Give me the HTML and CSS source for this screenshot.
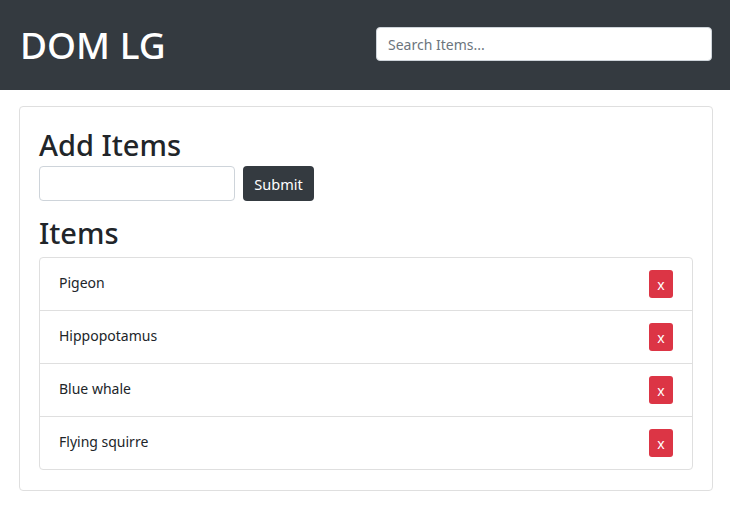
FILE: index.html
```html
<!DOCTYPE html>
<html>
<head>
<meta charset="utf-8">
<link rel="stylesheet" href="styles.css">
</head>
<body>
<header class="navbar">
  <h1 class="brand">DOM LG</h1>
  <input class="search" type="text" placeholder="Search Items...">
</header>
<main class="container">
  <section class="card">
    <h2 class="title">Add Items</h2>
    <form class="add-form">
      <input class="field" type="text">
      <button class="btn-dark" type="button">Submit</button>
    </form>
    <h2 class="title items-title">Items</h2>
    <ul class="list">
      <li class="item"><span>Pigeon</span><button class="btn-del" type="button">x</button></li>
      <li class="item"><span>Hippopotamus</span><button class="btn-del" type="button">x</button></li>
      <li class="item"><span>Blue whale</span><button class="btn-del" type="button">x</button></li>
      <li class="item"><span>Flying squirre</span><button class="btn-del" type="button">x</button></li>
    </ul>
  </section>
</main>
</body>
</html>
```
FILE: styles.css
```css
* { box-sizing: border-box; }
body {
  margin: 0;
  font-family: "Noto Sans", "Open Sans", sans-serif;
  color: #212529;
  background: #fff;
}
.navbar {
  background: #343a40;
  height: 90px;
  display: flex;
  align-items: center;
  justify-content: space-between;
  padding: 0 18px 0 20px;
}
.brand {
  margin: 0;
  color: #fff;
  font-size: 37px;
  font-weight: 500;
  line-height: 1.2;
}
.search {
  width: 336px;
  height: 34px;
  border: 1px solid #ced4da;
  border-radius: 4px;
  padding: 0 11px;
  font-family: inherit;
  font-size: 14px;
  color: #495057;
  margin-top: -2px;
}
.search::placeholder { color: #6c757d; }
.container {
  padding: 16px 17px 0 19px;
}
.card {
  border: 1px solid #dfdfdf;
  border-radius: 4px;
  padding: 20px 19px 20px 19px;
}
.title {
  margin: 0;
  font-size: 29px;
  font-weight: 500;
  line-height: 36px;
}
.add-form {
  display: flex;
  gap: 8px;
  margin-top: 3px;
}
.field {
  width: 196px;
  height: 35px;
  border: 1px solid #ced4da;
  border-radius: 4px;
}
.btn-dark {
  height: 35px;
  width: 71px;
  background: #343a40;
  color: #fff;
  border: none;
  border-radius: 4px;
  font-family: inherit;
  font-size: 14.5px;
}
.items-title { margin-top: 14px; }
.list {
  list-style: none;
  margin: 6px 0 0;
  padding: 0;
  border: 1px solid #dfdfdf;
  border-radius: 4px;
}
.item {
  display: flex;
  align-items: center;
  justify-content: space-between;
  padding: 12px 19px 12px 19px;
  font-size: 14px;
  border-top: 1px solid #dfdfdf;
  height: 53px;
}
.item:first-child { border-top: none; height: 52px; }
.item span { margin-top: -4px; }
.btn-del {
  width: 24px;
  height: 28px;
  background: #dc3545;
  color: #fff;
  border: none;
  border-radius: 3px;
  font-family: inherit;
  font-size: 14px;
  padding: 0;
}
```
